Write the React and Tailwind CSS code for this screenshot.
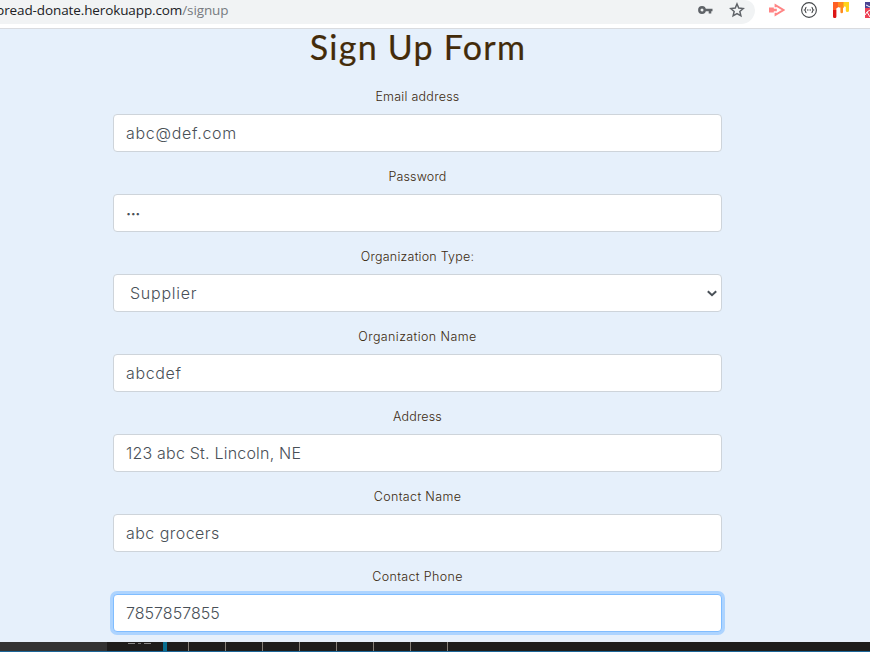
const fields = [
  { label: 'Email address', value: 'abc@def.com', labelTrack: 'tracking-[0.25px]', track: 'tracking-[0.68px]' },
  { label: 'Password', value: '•••', labelTrack: 'tracking-[0.15px]', track: 'pt-px text-[9px] tracking-[-0.4px]' },
  { label: 'Organization Type:', value: 'Supplier', labelTrack: 'tracking-[0.22px]', track: 'pl-1 tracking-[0.75px]', select: true },
  { label: 'Organization Name', value: 'abcdef', labelTrack: 'tracking-[0.4px]', track: 'tracking-[0.65px]' },
  { label: 'Address', value: '123 abc St. Lincoln, NE', labelTrack: 'tracking-[0.15px]', track: 'tracking-[0.2px]' },
  { label: 'Contact Name', value: 'abc grocers', labelTrack: 'tracking-[0.35px]', track: 'tracking-[0.45px]' },
  { label: 'Contact Phone', value: '7857857855', labelTrack: 'tracking-[0.35px]', track: 'tracking-[0.03px]', focused: true },
];

function BrowserBar() {
  return (
    <header className="flex h-[29px] shrink-0 items-start border-b border-[#d9dbdf] bg-white">
      <div className="flex h-6 w-[755px] items-start overflow-hidden rounded-br-[14px] rounded-tr-[10px] bg-[#f1f3f4]">
        <div className="-ml-[4px] flex-1 whitespace-nowrap font-['Open_Sans','Noto_Sans',sans-serif] text-[13.5px] leading-[20px] tracking-[-0.11px] text-[#202124]">
          pread-donate.herokuapp.com<span className="text-[#777b80]">/signup</span>
        </div>
        <svg className="mr-[16px] mt-[5px] h-[10px] w-[15px]" viewBox="0 0 15 10" fill="none" stroke="#5f6368">
          <circle cx="4" cy="5" r="2.7" strokeWidth="2.4" />
          <path d="M7 5h7.5M12 5v3.6" strokeWidth="2.6" />
        </svg>
        <svg className="mr-[10px] mt-[2px] h-4 w-4" viewBox="0 0 16 16" fill="none" stroke="#5f6368" strokeWidth="1.5">
          <path d="m8 2 1.75 4.1 4.5.4-3.4 2.95 1 4.35L8 11.5l-3.85 2.3 1-4.35-3.4-2.95 4.5-.4Z" />
        </svg>
      </div>
      <svg className="ml-[14px] mt-[3px] h-[14px] w-4" viewBox="0 0 16 14" fill="none" stroke="#ff8585">
        <path d="M6.6 4.2V2.2L14.4 7l-7.8 4.8v-2" strokeWidth="2" />
        <path d="M0 4.5h4.8v5H0zM4.8 5.8h3v2.4h-3z" fill="#ff8585" stroke="none" />
      </svg>
      <svg className="ml-4 mt-[2px] h-4 w-4" viewBox="0 0 16 16" fill="none" stroke="#44474a">
        <circle cx="8" cy="8" r="7.4" strokeWidth="1.1" />
        <path d="M5.4 5.2C4 5.6 5 7.4 3.6 8 5 8.6 4 10.4 5.4 10.8M10.6 5.2c1.4.4.4 2.2 1.8 2.8-1.4.6-.4 2.4-1.8 2.8" strokeWidth="1.1" />
        <path d="M6 8h4" strokeWidth="1.2" strokeDasharray="1 .5" />
      </svg>
      <svg className="ml-4 mt-[2px] h-4 w-4" viewBox="0 0 16 16">
        <path d="M0 0h7v5.5H5A1.8 1.8 0 0 0 3.4 8H0Z" fill="#ff5f24" />
        <path d="M0 8h3.4v6.3A1.7 1.7 0 0 1 0 14.5Z" fill="#dc1515" />
        <path d="M5 0h6v5.2a1.3 1.3 0 0 0-1 1.3V10a1.3 1.3 0 0 1-2.6 0V6A1.6 1.6 0 0 0 5 5Z" fill="#ff8a1f" />
        <path d="M5 5.2A1.3 1.3 0 0 1 6.4 6.5V14a1.2 1.2 0 0 1-1.2 1.2V8Z" fill="#ffffff" />
        <path d="M10.5 0H16v8.5a1.6 1.6 0 0 1-3.2 0V6a1.2 1.2 0 0 0-2.3-.7Z" fill="#ffd41c" />
      </svg>
      <svg className="ml-4 mt-[2px] h-4 w-[5px]" viewBox="0 0 5 16">
        <path d="M0 0h5v6H0z" fill="#4b4493" />
        <path d="M0 6h5v10H0z" fill="#ed4055" />
        <path d="m1 3 4 2M0 13l2-3 3-2M2 10l3 5" stroke="#ffffff" strokeWidth="1" fill="none" />
      </svg>
    </header>
  );
}

function Field({ label, value, labelTrack, track, select, focused }) {
  return (
    <div className="flex flex-col">
      <label className={`mb-2 h-5 text-center text-[12.5px] font-light leading-[21px] text-[#3c2a10] ${labelTrack}`}>
        <span>{label}</span>
      </label>
      <div
        className={`mb-[14px] flex h-[38px] items-center rounded-[4px] border bg-white pl-3 pr-1 ${
          focused ? 'border-[#80bdff] shadow-[0_0_0_3px_#add4ff]' : 'border-[#ced4da]'
        }`}
      >
        <span className={`flex-1 whitespace-nowrap font-light text-[#495057] ${track} ${value === '•••' ? '' : 'text-base'}`}>
          {value}
        </span>
        {select && (
          <svg className="h-[7px] w-[10px]" viewBox="0 0 10 7" fill="none" stroke="#495057" strokeWidth="2">
            <path d="m.8 1.2 4.2 4 4.2-4" />
          </svg>
        )}
      </div>
    </div>
  );
}

function Timeline() {
  return (
    <footer className="flex h-[10px] shrink-0 overflow-hidden border-b border-[#1d6698] bg-[#1e1d1c]">
      <div className="w-[107px] bg-[#333333]" />
      <div className="flex w-14 items-start justify-center gap-[3px] pl-2 pt-px">
        <i className="h-px w-[7px] bg-[#888888]" />
        <i className="h-px w-[3px] bg-[#777777]" />
        <i className="h-px w-[7px] bg-[#888888]" />
      </div>
      <div className="w-1 bg-[#086f91]" />
      <div className="ml-[21px] flex gap-9">
        {[0, 1, 2, 3, 4, 5, 6, 7].map((n) => (
          <i key={n} className="h-[9px] w-px bg-[#858078]" />
        ))}
      </div>
    </footer>
  );
}

export default function App() {
  return (
    <div className="flex h-[652px] w-[870px] flex-col overflow-hidden bg-[#e6f0fb] font-['Inter','Liberation_Sans',sans-serif]">
      <BrowserBar />
      <main className="ml-[113px] h-[613px] w-[609px] shrink-0">
        <h1 className="h-[57px] whitespace-nowrap pl-px text-center font-['Lato',sans-serif] text-[34px] leading-[36px] tracking-[1.25px] text-[#432b09] [-webkit-text-stroke:0.2px_#432b09]">
          Sign Up Form
        </h1>
        {fields.map((f) => (
          <Field key={f.label} {...f} />
        ))}
      </main>
      <Timeline />
    </div>
  );
}
